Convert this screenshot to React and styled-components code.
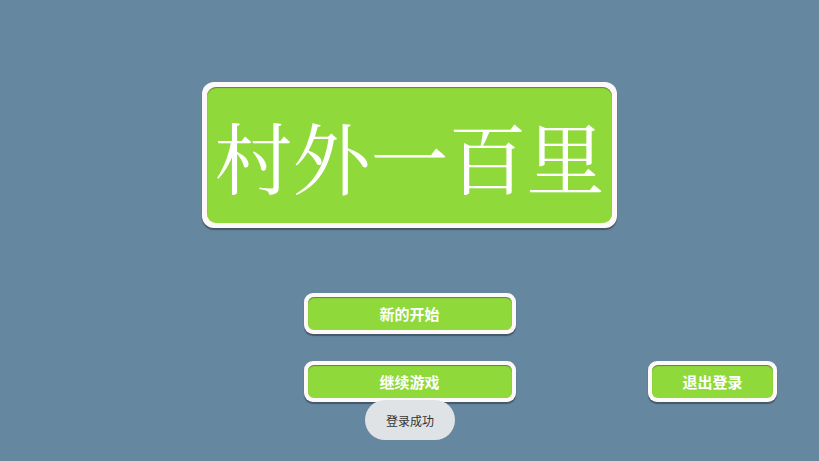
import styled, { createGlobalStyle } from 'styled-components';

const GlobalStyle = createGlobalStyle`
  html, body {
    margin: 0;
    padding: 0;
    background-color: #6587a0;
  }
  body {
    font-family: "Noto Sans CJK SC", "Noto Sans", sans-serif;
  }
`;

const Screen = styled.div`
  position: relative;
  width: 100vw;
  height: 100vh;
  overflow: hidden;
  background-color: #6587a0;
  display: flex;
  flex-direction: column;
  align-items: center;
  padding-top: 82px;
  box-sizing: border-box;
`;

const Frame = styled.div`
  box-sizing: border-box;
  width: ${(p) => p.$w}px;
  height: ${(p) => p.$h}px;
  padding: ${(p) => p.$pad || 4}px;
  background-color: #fdf9f9;
  border-radius: ${(p) => p.$radius || 9}px;
  box-shadow: 0 2px 1px rgba(40, 50, 60, 0.55);
  display: flex;
`;

const Face = styled.div`
  flex: 1;
  display: flex;
  align-items: center;
  justify-content: center;
  background-color: #8fd93a;
  border-radius: ${(p) => p.$radius || 6}px;
  box-shadow: inset 0 1px 1px rgba(60, 60, 60, 0.55);
  color: #fff;
`;

const TitleText = styled.h1`
  margin: 0;
  font-family: "Noto Serif CJK SC", "Liberation Serif", serif;
  font-weight: 400;
  font-size: 78px;
  line-height: 1;
`;

const Label = styled.span`
  font-size: 15px;
  font-weight: 700;
`;

const Menu = styled.div`
  width: 100%;
  display: flex;
  flex-direction: column;
  align-items: center;
  margin-top: 65px;
  gap: 27px;
`;

const Row = styled.div`
  width: 100%;
  display: grid;
  grid-template-columns: 1fr auto 1fr;
  align-items: center;
`;

const Side = styled.div`
  display: flex;
  justify-content: flex-end;
  padding-right: 42px;
`;

const Toast = styled.div`
  position: absolute;
  left: 365px;
  top: 400px;
  width: 90px;
  height: 40px;
  border-radius: 20px;
  background-color: #dfe3e6;
  color: #333;
  font-size: 12px;
  display: flex;
  align-items: center;
  justify-content: center;
`;

function MenuButton({ children, width }) {
  return (
    <Frame $w={width} $h={41}>
      <Face>
        <Label>{children}</Label>
      </Face>
    </Frame>
  );
}

export default function App() {
  return (
    <>
      <GlobalStyle />
      <Screen>
        <Frame $w={415} $h={146} $pad={5} $radius={12}>
          <Face $radius={9}>
            <TitleText>村外一百里</TitleText>
          </Face>
        </Frame>
        <Menu>
          <MenuButton width={212}>新的开始</MenuButton>
          <Row>
            <div />
            <MenuButton width={212}>继续游戏</MenuButton>
            <Side>
              <MenuButton width={129}>退出登录</MenuButton>
            </Side>
          </Row>
        </Menu>
        <Toast>登录成功</Toast>
      </Screen>
    </>
  );
}
